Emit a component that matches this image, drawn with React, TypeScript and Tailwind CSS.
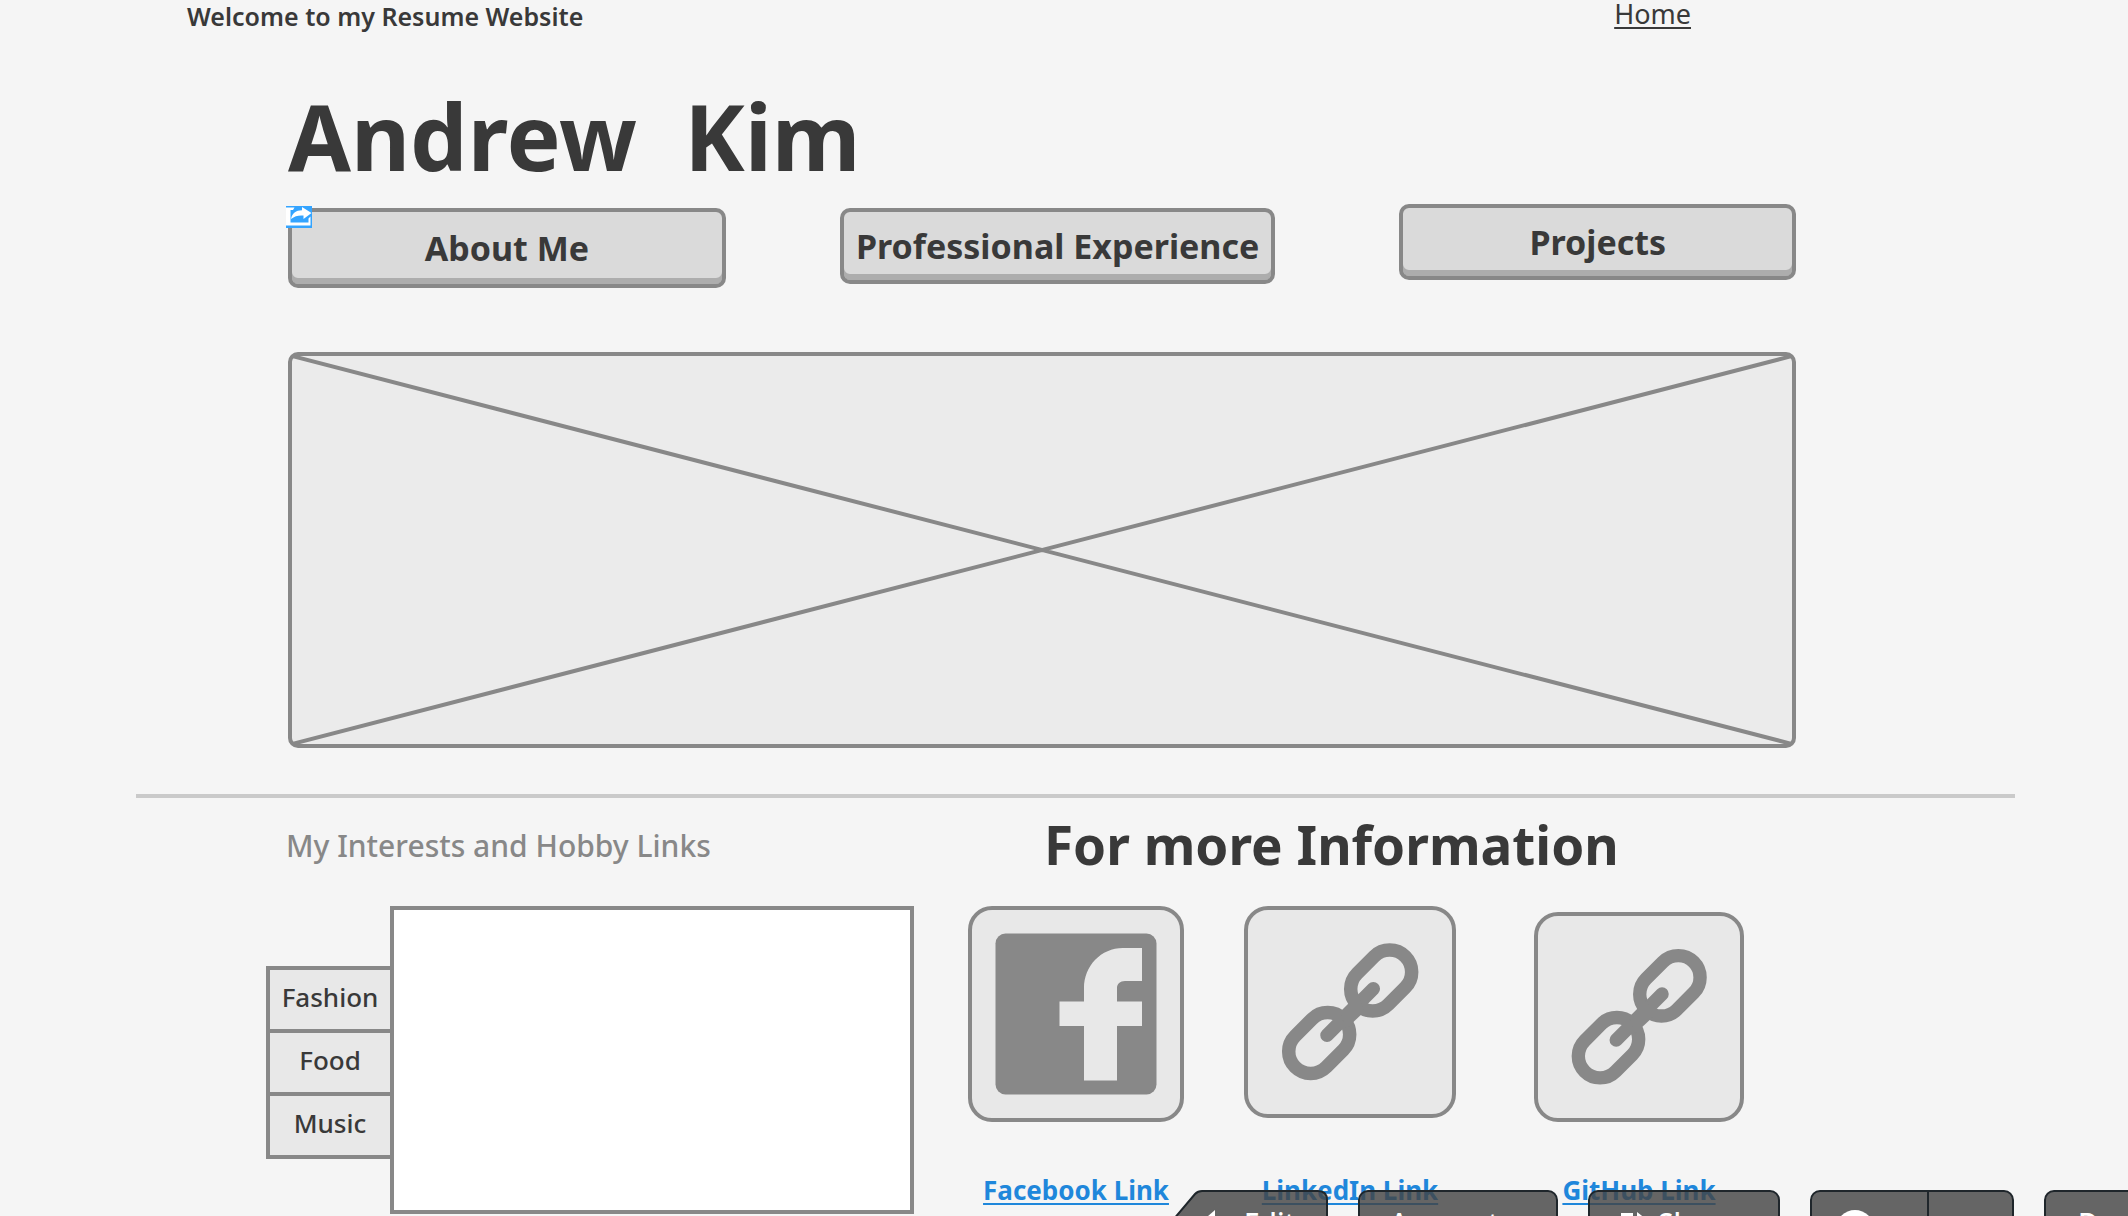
import type { ReactNode } from "react";

function ShareBadge() {
  return (
    <svg
      viewBox="0 0 26 22"
      aria-hidden="true"
      className="absolute -top-1.5 -left-1.5 h-[22px] w-[26px]"
    >
      <rect width="26" height="22" fill="#34a4ff" />
      <path
        d="M0 1.5H8.5L7 4H4.5V16.5H22.5V12.5L24.5 10.5V19.5H0Z"
        fill="#ffffff"
      />
      <path
        d="M5 13C6 7.5 10 4.2 16 4.2V1L25.5 7L17.5 13V9.5C12.5 9 9 10 5 13Z"
        fill="#ffffff"
      />
    </svg>
  );
}

function NavButton({
  children,
  className,
}: {
  children: ReactNode;
  className: string;
}) {
  return (
    <button
      type="button"
      className={`relative rounded-[10px] border-4 border-[#888888] bg-[#dadada] text-[34px] leading-[60px] font-bold whitespace-nowrap shadow-[inset_0_-6px_0_#adadad] ${className}`}
    >
      {children}
    </button>
  );
}

function ImagePlaceholder() {
  return (
    <div className="mt-16 h-[396px] rounded-[10px] border-4 border-[#888888] bg-[#ebebeb]">
      <svg
        viewBox="0 0 100 100"
        preserveAspectRatio="none"
        role="img"
        aria-label="Banner image"
        className="size-full"
      >
        <path
          d="M0 0L100 100M100 0L0 100"
          stroke="#888888"
          strokeWidth="4"
          vectorEffect="non-scaling-stroke"
        />
      </svg>
    </div>
  );
}

function FacebookIcon() {
  return (
    <svg viewBox="4 4 208 208" aria-hidden="true" className="size-full">
      <rect x="27.5" y="27.5" width="161" height="161" rx="10" fill="#888888" />
      <path
        d="M116 174.5V120H91.5V95.5H116V82C116 60 133 42 155 42H174V75H157C152 75 149 78 149 82V95.5H174V120H149V174.5Z"
        fill="#e8e8e8"
      />
    </svg>
  );
}

function ChainIcon() {
  return (
    <svg viewBox="4 4 204 204" aria-hidden="true" className="size-full">
      <g fill="none" stroke="#888888" strokeWidth="13.5">
        <rect
          x="103.2"
          y="52.5"
          width="68"
          height="44"
          rx="22"
          transform="rotate(-45 137.2 74.5)"
        />
        <rect
          x="41.2"
          y="115"
          width="68"
          height="44"
          rx="22"
          transform="rotate(-45 75.2 137)"
        />
        <path d="M83 129.3L129.3 82.7" strokeLinecap="round" />
      </g>
      <path
        d="M96 106L114 88L120 106L102 123Z"
        fill="#888888"
      />
    </svg>
  );
}

function LinkCard({
  label,
  className,
  tile,
  children,
}: {
  label: string;
  className: string;
  tile: string;
  children: ReactNode;
}) {
  return (
    <div className={`flex h-[300px] flex-col items-center ${className}`}>
      <div
        className={`rounded-3xl border-4 border-[#888888] bg-[#e8e8e8] ${tile}`}
      >
        {children}
      </div>
      <a
        href="#"
        className="mt-auto text-[26px] leading-8 font-bold whitespace-nowrap text-[#1f87db] underline decoration-2 underline-offset-3"
      >
        {label}
      </a>
    </div>
  );
}

const toolBox =
  "flex h-[66px] items-center rounded-[10px] border-2 border-[#1f262b] bg-[#444444]/81";

function Toolbar() {
  return (
    <div className="absolute right-0 -bottom-10 left-[1168px] flex overflow-hidden text-[28px] font-medium text-white">
      <button
        type="button"
        className="relative flex h-[66px] w-[160px] shrink-0 items-center gap-7 pl-8"
      >
        <svg
          viewBox="0 0 160 66"
          aria-hidden="true"
          className="absolute inset-0 size-full"
        >
          <path
            d="M34 1H150Q159 1 159 10V56Q159 65 150 65H34Q30 65 27 61L5 36Q3 33 5 30L27 4Q30 1 34 1Z"
            fill="#444444"
            fillOpacity="0.81"
            stroke="#1f262b"
            strokeWidth="2"
          />
        </svg>
        <svg viewBox="0 0 16 26" aria-hidden="true" className="relative h-[26px] w-4">
          <path d="M15 0V26L0 13Z" fill="#ffffff" />
        </svg>
        <span className="relative">Edit</span>
      </button>
      <button type="button" className={`${toolBox} ml-[30px] w-[200px] shrink-0 pl-[30px]`}>
        Account
      </button>
      <button type="button" className={`${toolBox} ml-[30px] w-[192px] shrink-0 gap-3 pl-[30px]`}>
        <svg viewBox="0 0 26 26" aria-hidden="true" className="h-[26px] w-[26px]">
          <path
            d="M13 5H3V23H21V17"
            fill="none"
            stroke="#ffffff"
            strokeWidth="4"
          />
          <path d="M17 2L26 9L17 16V12Q11 12 8 18Q8 7 17 6Z" fill="#ffffff" />
        </svg>
        Share
      </button>
      <div className={`${toolBox} ml-[30px] w-[204px] shrink-0`}>
        <button
          type="button"
          aria-label="Help"
          className="flex h-full flex-1 items-center border-r-2 border-[#1f262b] pt-3 pl-6"
        >
          <span className="size-[38px] rounded-full bg-white" />
        </button>
        <button type="button" aria-label="More" className="h-full w-[83px]" />
      </div>
      <button type="button" className={`${toolBox} ml-[30px] w-[180px] shrink-0 pl-8`}>
        Design
      </button>
    </div>
  );
}

export default function App() {
  return (
    <div className="relative min-h-screen overflow-hidden bg-[#f5f5f5] font-['Noto_Sans',sans-serif] text-[#393939]">
      <header className="flex items-start justify-between pr-[437px] pl-[187px]">
        <p className="text-[25px] leading-8 font-semibold">
          Welcome to my Resume Website
        </p>
        <a
          href="#"
          className="text-[27px] leading-7 underline decoration-2 underline-offset-3"
        >
          Home
        </a>
      </header>

      <main>
        <div className="pt-[54px] pr-[332px] pl-[288px]">
          <h1 className="text-[91px] leading-[100px] font-bold whitespace-pre">
            {"Andrew  Kim"}
          </h1>
          <nav className="mt-[18px] flex items-start">
            <NavButton className="mt-1 h-20 flex-[438]">
              <ShareBadge />
              About Me
            </NavButton>
            <NavButton className="mt-1 ml-[114px] h-[76px] flex-[436]">
              Professional Experience
            </NavButton>
            <NavButton className="ml-[124px] h-[76px] flex-[396]">
              Projects
            </NavButton>
          </nav>
          <ImagePlaceholder />
        </div>

        <hr className="mt-[46px] mr-[113px] ml-[136px] border-t-4 border-[#cacaca]" />

        <div className="flex items-start gap-[54px] pl-[266px]">
          <section className="w-[648px] pt-7">
            <h2 className="pl-5 text-[30px] leading-10 font-medium text-[#888888]">
              My Interests and Hobby Links
            </h2>
            <div className="mt-10 flex items-start">
              <div
                role="tablist"
                aria-orientation="vertical"
                className="relative z-10 mt-[60px] -mr-1 flex w-32 flex-col"
              >
                {["Fashion", "Food", "Music"].map((name) => (
                  <button
                    key={name}
                    type="button"
                    role="tab"
                    className="-mb-1 h-[67px] border-4 border-[#888888] bg-[#e8e8e8] pb-1.5 text-[26px] leading-8 font-medium"
                  >
                    {name}
                  </button>
                ))}
              </div>
              <div
                role="tabpanel"
                className="h-[308px] flex-1 border-4 border-[#888888] bg-white"
              />
            </div>
          </section>

          <section className="pt-[17px]">
            <h2 className="pl-[76px] text-[53px] leading-[60px] font-bold">
              For more Information
            </h2>
            <div className="mt-[31px] flex items-start">
              <LinkCard label="Facebook Link" className="w-[216px]" tile="size-[216px]">
                <FacebookIcon />
              </LinkCard>
              <LinkCard label="LinkedIn Link" className="ml-[60px] w-[212px]" tile="size-[212px]">
                <ChainIcon />
              </LinkCard>
              <LinkCard label="GitHub Link" className="ml-[78px] w-[210px]" tile="mt-1.5 size-[210px]">
                <ChainIcon />
              </LinkCard>
            </div>
          </section>
        </div>
      </main>

      <Toolbar />
    </div>
  );
}
